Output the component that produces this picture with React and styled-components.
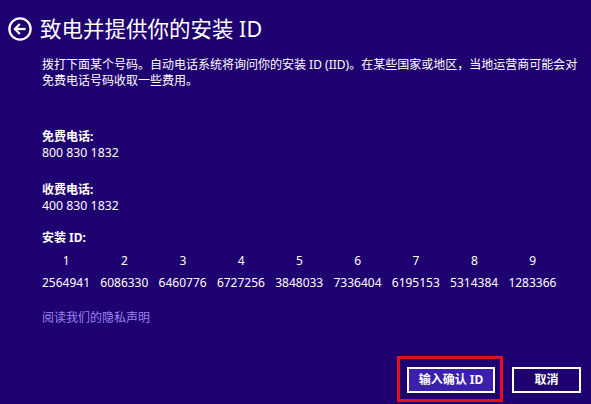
import React from "react";
import styled, { createGlobalStyle } from "styled-components";

const installId = [
    "2564941", "6086330", "6460776", "6727256", "3848033",
    "7336404", "6195153", "5314384", "1283366",
];

const GlobalStyle = createGlobalStyle`
    html, body {
        margin: 0;
        padding: 0;
        background-color: #1f0070;
    }
    body {
        font-family: "Noto Sans", "Noto Sans CJK SC", sans-serif;
        color: #ffffff;
    }
`

function BackIcon() {
    return (
        <svg width="24" height="24" viewBox="0 0 24 24" fill="none" stroke="#ffffff" strokeWidth="2.3">
            <circle cx="12" cy="12" r="10.6" />
            <path d="M17.6 12H7" />
            <path d="M11.8 7L6.9 12L11.8 17" strokeLinejoin="miter" />
        </svg>
    )
}

function App() {
    return (
        <Page>
            <GlobalStyle />
            <Header>
                <BackIcon />
                <Title>致电并提供你的安装 ID</Title>
            </Header>
            <Content>
                <Intro>
                    拨打下面某个号码。自动电话系统将询问你的安装 ID (IID)。在某些国家或地区，当地运营商可能会对
                    <br />
                    免费电话号码收取一些费用。
                </Intro>
                <Block $top={40}>
                    <Label>免费电话:</Label>
                    <Value>800 830 1832</Value>
                </Block>
                <Block $top={21}>
                    <Label>收费电话:</Label>
                    <Value>400 830 1832</Value>
                </Block>
                <Block $top={16}>
                    <Label>安装 ID:</Label>
                    <IdGrid>
                        {installId.map((_, i) => (
                            <IdIndex key={"h" + i}>{i + 1}</IdIndex>
                        ))}
                        {installId.map((group) => (
                            <IdGroup key={group}>{group}</IdGroup>
                        ))}
                    </IdGrid>
                </Block>
                <PrivacyLink href="#">阅读我们的隐私声明</PrivacyLink>
            </Content>
            <Footer>
                <Highlight>
                    <Button $primary>输入确认 ID</Button>
                </Highlight>
                <Button $width={69}>取消</Button>
            </Footer>
        </Page>
    )
}

export default App;

const Page = styled.div`
    height: 404px;
    display: flex;
    flex-direction: column;
    background-color: #1f0070;
    box-sizing: border-box;
    overflow: hidden;
`
const Header = styled.header`
    display: flex;
    flex-direction: row;
    align-items: center;
    gap: 8px;
    padding: 17px 0 0 8px;
    height: 24px;
`
const Title = styled.h1`
    margin: 0;
    font-size: 21.5px;
    font-weight: 400;
    line-height: 24px;
    color: #ffffff;
    white-space: nowrap;
`
const Content = styled.main`
    display: flex;
    flex-direction: column;
    padding-left: 42px;
`
const Intro = styled.p`
    margin: 16px 0 0 0;
    font-size: 12px;
    line-height: 16px;
    white-space: nowrap;
`
const Block = styled.section`
    display: flex;
    flex-direction: column;
    margin-top: ${(p) => p.$top}px;
`
const Label = styled.div`
    font-size: 12px;
    line-height: 16px;
    font-weight: 700;
`
const Value = styled.div`
    font-size: 12.3px;
    line-height: 16px;
`
const IdGrid = styled.div`
    display: grid;
    grid-template-columns: repeat(9, 48.5px);
    column-gap: 9.8px;
    row-gap: 6.5px;
    margin-top: 6.5px;
    font-size: 12px;
    line-height: 16px;
`
const IdIndex = styled.span`
    text-align: center;
`
const IdGroup = styled.span`
    white-space: nowrap;
`
const PrivacyLink = styled.a`
    margin-top: 19px;
    align-self: flex-start;
    font-size: 12px;
    line-height: 16px;
    color: #9d86f2;
    text-decoration: none;
`
const Footer = styled.footer`
    margin-top: auto;
    display: flex;
    flex-direction: row;
    align-items: flex-start;
    justify-content: flex-end;
    gap: 9px;
    padding: 0 10px 2px 0;
`
const Highlight = styled.div`
    border: 3px solid #e5101c;
    padding: 8px 5px 6px 7px;
`
const Button = styled.button`
    box-sizing: border-box;
    width: ${(p) => (p.$primary ? 88 : p.$width)}px;
    height: 26px;
    margin-top: ${(p) => (p.$primary ? 0 : 11)}px;
    padding: 0;
    border: 2px solid #ffffff;
    background-color: ${(p) => (p.$primary ? "#3d1fae" : "#1f0070")};
    color: #ffffff;
    font-family: "Noto Sans", "Noto Sans CJK SC", sans-serif;
    font-size: 12px;
    font-weight: 700;
    line-height: 20px;
    cursor: pointer;
`
